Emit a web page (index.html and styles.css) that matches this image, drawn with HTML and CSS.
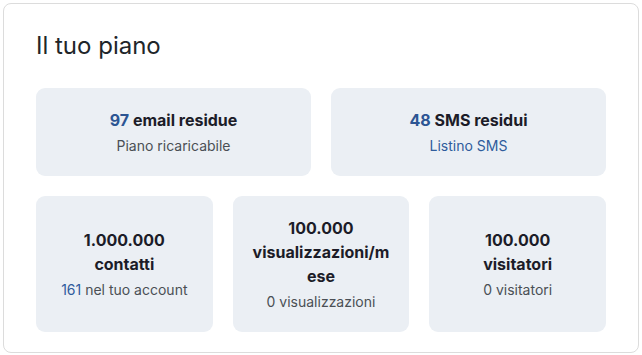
FILE: index.html
```html
<!DOCTYPE html>
<html lang="it">
<head>
    <meta charset="UTF-8">
    <meta name="viewport" content="width=device-width, initial-scale=1.0">
    <title>Il tuo piano</title>
    <link rel="stylesheet" href="styles.css">
</head>
<body>
    <div class="plan-card">
        <h2 class="plan-title">Il tuo piano</h2>

        <div class="plan-row plan-row-2">
            <div class="plan-box">
                <div class="plan-value"><span class="plan-num">97</span> email residue</div>
                <div class="plan-sub">Piano ricaricabile</div>
            </div>
            <div class="plan-box">
                <div class="plan-value"><span class="plan-num">48</span> SMS residui</div>
                <div class="plan-sub"><a href="#" class="plan-link">Listino SMS</a></div>
            </div>
        </div>

        <div class="plan-row plan-row-3">
            <div class="plan-box">
                <div class="plan-value">1.000.000<br>contatti</div>
                <div class="plan-sub"><span class="plan-blue">161</span> nel tuo account</div>
            </div>
            <div class="plan-box">
                <div class="plan-value">100.000<br>visualizzazioni/mese</div>
                <div class="plan-sub">0 visualizzazioni</div>
            </div>
            <div class="plan-box">
                <div class="plan-value">100.000<br>visitatori</div>
                <div class="plan-sub">0 visitatori</div>
            </div>
        </div>
    </div>
</body>
</html>
```

FILE: styles.css
```css
body {
    margin: 0;
    background: #fff;
    font-family: Inter, "Noto Sans", sans-serif;
    color: #212529;
}
.plan-card {
    margin: 3px;
    width: 570px;
    padding: 27px 32px 20px;
    border: 1px solid #dcdcdc;
    border-radius: 8px;
    background: #fff;
}
.plan-title {
    margin: 0 0 28px;
    font-size: 24px;
    line-height: 29px;
    font-weight: 400;
    color: #212529;
}
.plan-row {
    display: grid;
    gap: 20px;
}
.plan-row-2 {
    grid-template-columns: 1fr 1fr;
    margin-bottom: 20px;
}
.plan-row-3 {
    grid-template-columns: 1fr 1fr 1fr;
}
.plan-box {
    display: flex;
    flex-direction: column;
    justify-content: center;
    padding: 20px 18px;
    background: #ebeff4;
    border-radius: 9px;
    text-align: center;
}
.plan-value {
    font-size: 16px;
    line-height: 24px;
    font-weight: 700;
    color: #1c1c28;
    overflow-wrap: anywhere;
}
.plan-num {
    color: #2c5593;
}
.plan-sub {
    margin-top: 3px;
    font-size: 14px;
    line-height: 21px;
    color: #4a4f55;
}
.plan-link,
.plan-blue {
    color: #2f5c9c;
    text-decoration: none;
}
```
